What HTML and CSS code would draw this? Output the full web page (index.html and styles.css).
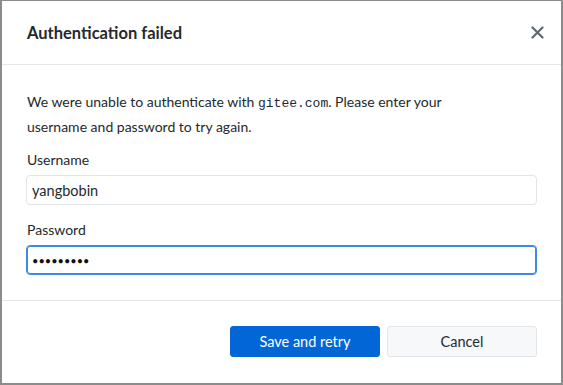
FILE: index.html
```html
<!DOCTYPE html>
<html lang="en">
<head>
    <meta charset="UTF-8">
    <meta name="viewport" content="width=device-width, initial-scale=1.0">
    <title>Authentication failed</title>
    <link rel="stylesheet" href="styles.css">
</head>
<body>
    <!-- Dialog -->
    <div class="dialog">
        <header class="dialog-header">
            <h1>Authentication failed</h1>
            <button class="close-btn" aria-label="Close">
                <svg width="13" height="13" viewBox="0 0 13 13">
                    <path d="M1.5 1.5 L11.5 11.5 M11.5 1.5 L1.5 11.5" stroke="#5f6872" stroke-width="2.2" stroke-linecap="round"/>
                </svg>
            </button>
        </header>

        <form class="dialog-body">
            <p class="intro">We were unable to authenticate with <code>gitee.com</code>. Please enter your username and password to try again.</p>
            <div class="form-group">
                <label for="username">Username</label>
                <input type="text" id="username" value="yangbobin">
            </div>
            <div class="form-group">
                <label for="password">Password</label>
                <input type="password" id="password" class="focused" value="123456789">
            </div>
        </form>

        <footer class="dialog-footer">
            <button type="submit" class="btn btn-primary">Save and retry</button>
            <button type="button" class="btn">Cancel</button>
        </footer>
    </div>
</body>
</html>
```

FILE: styles.css
```css
* {
    margin: 0;
    padding: 0;
    box-sizing: border-box;
}

body {
    background-color: #fff;
    color: #24292e;
    font-family: Lato, "Noto Sans", sans-serif;
    font-size: 14px;
}

.dialog {
    height: 100vh;
    display: flex;
    flex-direction: column;
    border: 2px solid #8c8c8c;
    border-top-width: 1px;
}

/* Header */
.dialog-header {
    height: 64px;
    display: flex;
    align-items: center;
    justify-content: space-between;
    padding: 0 17px 0 24px;
    border-bottom: 1px solid #e4e6e9;
}

.dialog-header h1 {
    font-size: 16.5px;
    font-weight: 700;
    padding-left: 1px;
}

.close-btn {
    display: flex;
    background: none;
    border: none;
    cursor: pointer;
}

/* Body */
.dialog-body {
    flex: 1;
    padding: 24px 24px 0;
}

.intro {
    max-width: 440px;
    line-height: 25px;
    margin-bottom: 10px;
    padding-left: 1px;
}

.intro code {
    font-family: "Liberation Mono", monospace;
    font-size: 13px;
    line-height: 0;
}

.form-group {
    margin-bottom: 14px;
}

.form-group label {
    display: block;
    line-height: 22px;
    margin-bottom: 4px;
    padding-left: 1px;
}

.form-group input {
    width: 100%;
    height: 30px;
    padding: 0 5px;
    border: 1px solid #e1e4e8;
    border-radius: 4px;
    color: #24292e;
    font-family: inherit;
    font-size: 14.5px;
    outline: none;
}

.form-group input.focused {
    border-color: #3d8ae6;
    box-shadow: inset 0 0 0 1px #3d8ae6;
    color: #111;
    font-size: 11px;
}

/* Footer */
.dialog-footer {
    display: flex;
    justify-content: flex-end;
    gap: 7px;
    padding: 25px 24px 26px;
    border-top: 1px solid #e4e6e9;
}

.btn {
    width: 150px;
    height: 31px;
    background-color: #f6f8fa;
    border: 1px solid #e1e4e8;
    border-radius: 3px;
    color: #24292e;
    font-family: inherit;
    font-size: 14.5px;
    cursor: pointer;
}

.btn-primary {
    background-color: #0366d6;
    border-color: #0366d6;
    color: #fff;
}
```
